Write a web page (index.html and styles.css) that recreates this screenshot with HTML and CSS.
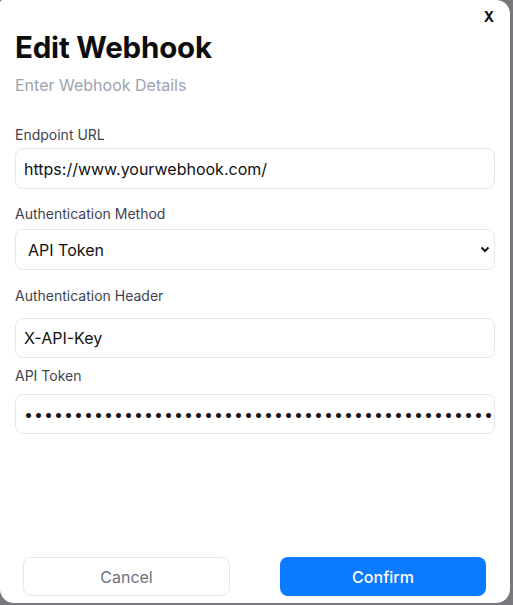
FILE: index.html
```html
<!DOCTYPE html>
<html lang="en">
<head>
    <meta charset="UTF-8">
    <title>Edit Webhook</title>
    <link rel="stylesheet" href="styles.css">
</head>
<body>

    <div class="modal">
        <button class="close-btn">X</button>

        <h2 class="title">Edit Webhook</h2>
        <p class="subtitle">Enter Webhook Details</p>

        <form class="webhook-form">
            <label class="field-label label-url" for="endpoint">Endpoint URL</label>
            <input class="field-input" id="endpoint" type="text" value="https://www.yourwebhook.com/">

            <label class="field-label label-method" for="method">Authentication Method</label>
            <select class="field-input field-select" id="method">
                <option>API Token</option>
                <option>Basic Auth</option>
                <option>None</option>
            </select>

            <label class="field-label label-header" for="header">Authentication Header</label>
            <input class="field-input" id="header" type="text" value="X-API-Key">

            <label class="field-label label-token" for="token">API Token</label>
            <input class="field-input field-password" id="token" type="password" value="sk_live_9f8a7b6c5d4e3f2a1b0c9d8e7f6a5b4c3d2e1f0a9b8c7d6e5f4a3b2c1d0e9f8a7b6c5">
        </form>

        <div class="actions">
            <button class="btn btn-cancel">Cancel</button>
            <button class="btn btn-confirm">Confirm</button>
        </div>
    </div>

</body>
</html>
```

FILE: styles.css
```css
* {
    margin: 0;
    padding: 0;
    box-sizing: border-box;
    font-family: Inter, "Noto Sans", sans-serif;
}

body {
    background: #77777e;
    width: 513px;
    height: 605px;
    overflow: hidden;
}

.modal {
    position: relative;
    width: 510px;
    height: 603px;
    background: #fff;
    border-radius: 3px 14px 14px 14px;
    padding: 30px 15px 0 15px;
    display: flex;
    flex-direction: column;
}

.close-btn {
    position: absolute;
    top: 8px;
    right: 16px;
    background: none;
    border: none;
    font-size: 14px;
    font-weight: 700;
    color: #111;
    cursor: pointer;
    line-height: 18px;
}

.title {
    font-size: 29.5px;
    line-height: 34px;
    font-weight: 700;
    color: #0d0d0d;
    letter-spacing: -0.2px;
}

.subtitle {
    margin-top: 9px;
    font-size: 16px;
    line-height: 24px;
    color: #9ca3af;
}

.webhook-form {
    display: flex;
    flex-direction: column;
    margin-top: 28px;
}

.field-label {
    font-size: 14px;
    line-height: 20px;
    color: #3f4450;
}

.label-url { margin-bottom: 3px; }
.label-method { margin-top: 15px; margin-bottom: 5px; }
.label-header { margin-top: 16px; margin-bottom: 12px; }
.label-token { margin-top: 8px; margin-bottom: 8px; }

.field-input {
    width: 100%;
    height: 40px;
    border: 1px solid #e5e7eb;
    border-radius: 8px;
    padding: 0 8px;
    font-size: 16px;
    color: #111;
    background: #fff;
    outline: none;
}

.field-input:first-of-type {
    height: 41px;
}

.field-select {
    padding: 0 8px 0 12px;
    appearance: none;
    background: #fff url("data:image/svg+xml;utf8,<svg xmlns='http://www.w3.org/2000/svg' width='10' height='7' viewBox='0 0 10 7'><path d='M1.5 1.5 L5 5 L8.5 1.5' fill='none' stroke='%23111' stroke-width='2'/></svg>") no-repeat right 4px center;
}

.field-password {
    letter-spacing: 1px;
    padding-right: 0;
}

.actions {
    margin-top: auto;
    margin-bottom: 7px;
    display: flex;
    justify-content: space-between;
    padding: 0 9px 0 8px;
}

.btn {
    width: 207px;
    height: 39px;
    border-radius: 8px;
    font-size: 16px;
    cursor: pointer;
}

.btn-cancel {
    background: #fff;
    border: 1px solid #e5e7eb;
    color: #6b7280;
}

.btn-confirm {
    width: 206px;
    background: #0a7aff;
    border: none;
    color: #fff;
    font-weight: 500;
}
```
